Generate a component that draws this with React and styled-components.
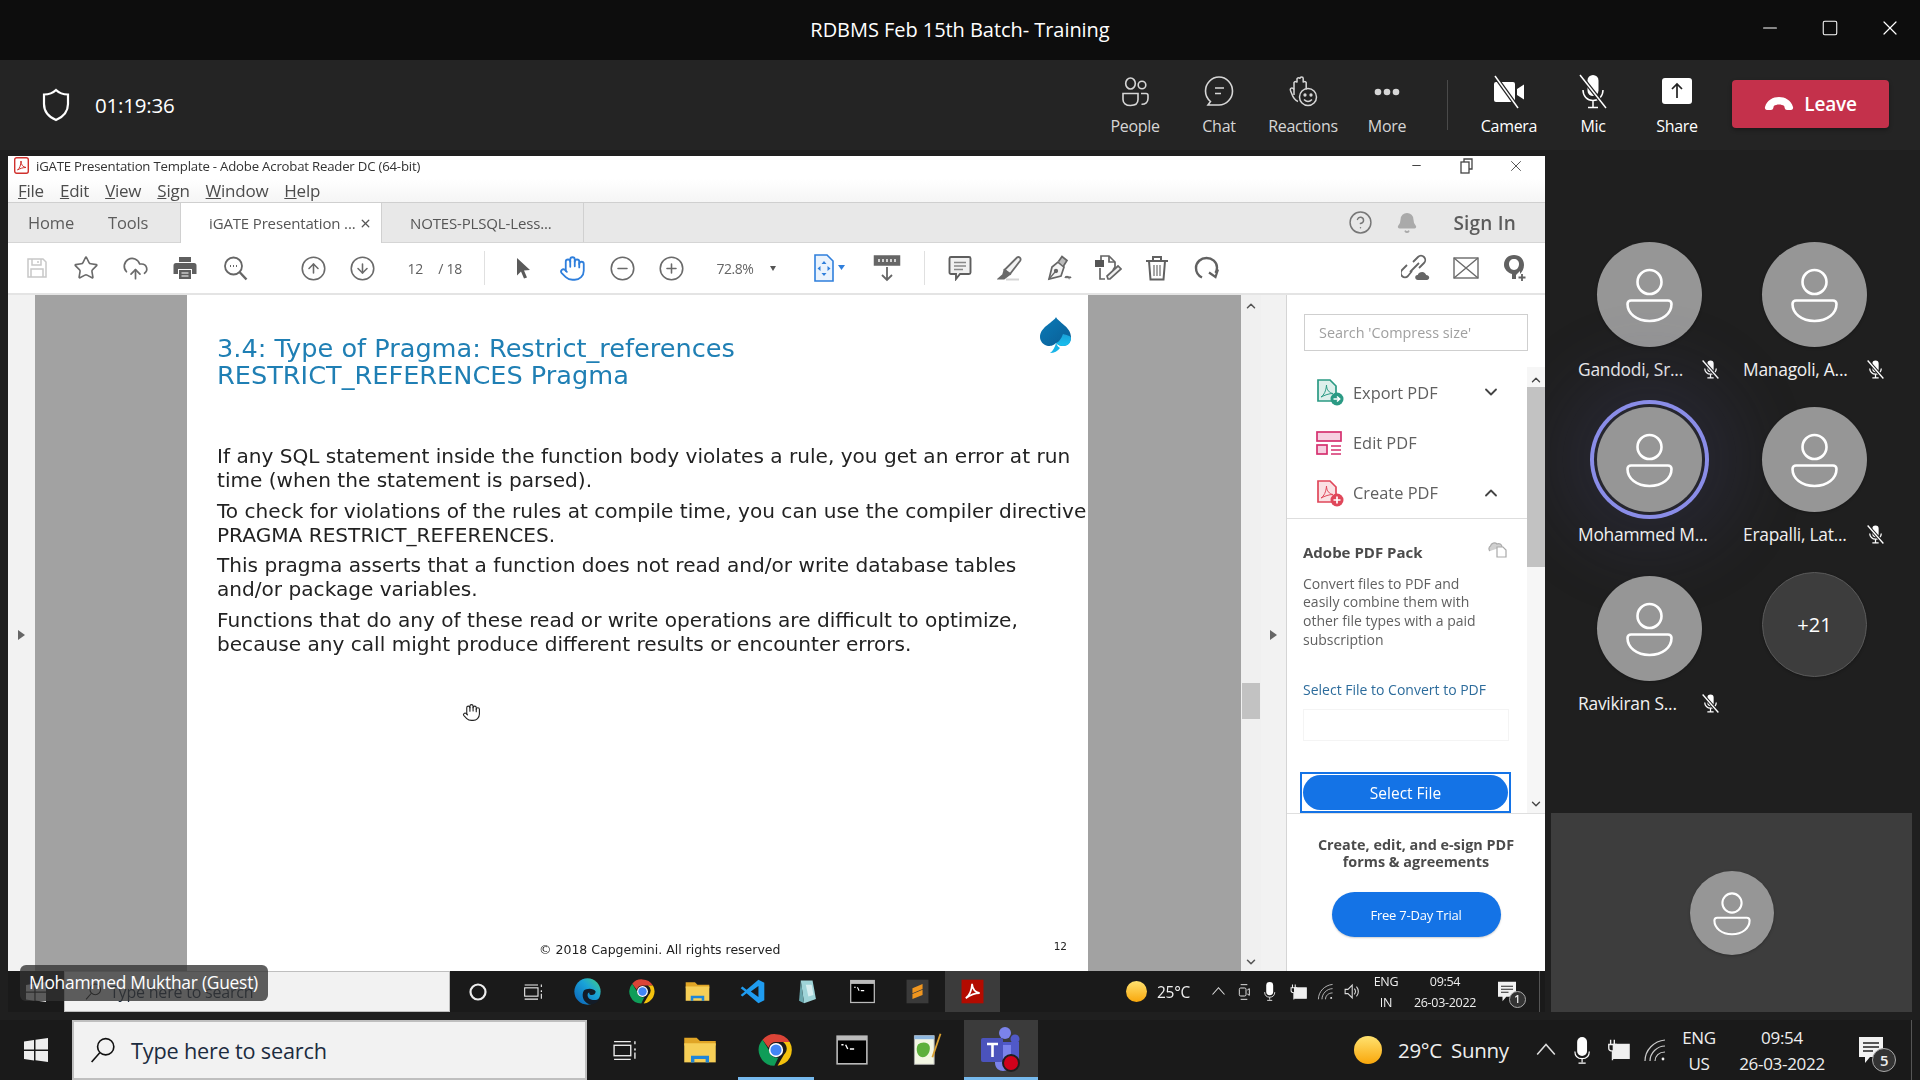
import React from "react";
import styled, { createGlobalStyle } from "styled-components";
import {
  Star, CloudUpload, CircleArrowUp, CircleArrowDown, Hand, CircleMinus, CirclePlus,
  ChevronDown, ChevronUp, X, Minus, Square, HelpCircle, Bell,
} from "lucide-react";

const GlobalStyle = createGlobalStyle`
  html, body { margin: 0; padding: 0; background: #1f1f1f; overflow: hidden; }
  * { box-sizing: border-box; }
`;

const Root = styled.div`
  width: 1920px;
  height: 1080px;
  display: flex;
  flex-direction: column;
  font-family: "Open Sans", "Noto Sans", sans-serif;
  color: #fff;
  background: #1f1f1f;
`;

/* ---------- teams chrome ---------- */
const TitleBar = styled.div`
  height: 60px;
  background: #0d0d0d;
  display: grid;
  grid-template-columns: 1fr auto 1fr;
  align-items: center;
`;
const MeetingTitle = styled.div`
  grid-column: 2;
  font-size: 20px;
  letter-spacing: -0.05px;
  padding-bottom: 1px;
`;
const WinControls = styled.div`
  grid-column: 3;
  justify-self: end;
  display: flex;
  height: 60px;
  padding-bottom: 4px;
`;
const WinControl = styled.div`
  width: 60px;
  display: flex;
  align-items: center;
  justify-content: center;
  color: #fff;
`;
const MeetingBar = styled.div`
  height: 90px;
  background: #242424;
  display: flex;
  align-items: flex-start;
  padding-left: 41px;
  padding-right: 31px;
`;
const Timer = styled.div`
  display: flex;
  align-items: center;
  gap: 24px;
  height: 90px;
  font-size: 20.5px;
  letter-spacing: -0.2px;
`;
const ToolGroup = styled.div`
  display: flex;
  margin-left: ${(p) => (p.$auto ? "auto" : "0")};
`;
const ToolButton = styled.div`
  width: 84px;
  height: 90px;
  padding-top: 16px;
  display: flex;
  flex-direction: column;
  align-items: center;
  color: ${(p) => (p.$bright ? "#fff" : "#d6d6d6")};
`;
const ToolIcon = styled.div`
  height: 32px;
  display: flex;
  align-items: center;
  justify-content: center;
`;
const ToolLabel = styled.div`
  margin-top: 7px;
  font-size: 16px;
  line-height: 22px;
  letter-spacing: -0.3px;
`;
const BarDivider = styled.div`
  width: 1px;
  height: 50px;
  margin: 20px 19px 0 18px;
  background: #4a4a4a;
`;
const LeaveButton = styled.div`
  width: 157px;
  height: 48px;
  margin: 20px 0 0 13px;
  border-radius: 4px;
  background: #c4314b;
  display: flex;
  align-items: center;
  justify-content: center;
  gap: 10px;
  font-size: 19px;
  font-weight: 600;
  letter-spacing: -0.2px;
  box-shadow: 0 2px 4px rgba(0, 0, 0, 0.3);
`;

const Stage = styled.div`
  flex: 1;
  min-height: 0;
  display: flex;
`;
const ShareColumn = styled.div`
  width: 1537px;
  margin: 6px 0 8px 8px;
  display: flex;
  flex-direction: column;
  position: relative;
`;
const ShareInner = styled.div`
  flex: 1;
  min-height: 0;
  display: flex;
  flex-direction: column;
  filter: blur(0.35px);
`;
const NameTag = styled.div`
  position: absolute;
  left: 12px;
  bottom: 11px;
  width: 248px;
  height: 36px;
  padding-left: 9px;
  border-radius: 6px;
  background: rgba(50, 50, 50, 0.78);
  font-size: 17.4px;
  letter-spacing: -0.25px;
  line-height: 35px;
  white-space: nowrap;
`;

/* ---------- acrobat ---------- */
const Acrobat = styled.div`
  flex: 1;
  min-height: 0;
  display: flex;
  flex-direction: column;
  background: #fff;
  color: #4b4b4b;
`;
const AcroTitle = styled.div`
  height: 23px;
  display: flex;
  align-items: center;
  padding: 0 0 4px 6px;
  gap: 7px;
  font-size: 13.2px;
  letter-spacing: -0.2px;
  color: #333;
`;
const AcroControls = styled.div`
  margin-left: auto;
  padding-right: 4px;
  display: flex;
  color: #444;
`;
const AcroControl = styled.div`
  width: 50px;
  height: 18px;
  display: flex;
  align-items: center;
  justify-content: center;
`;
const MenuRow = styled.div`
  height: 23px;
  display: flex;
  align-items: center;
  gap: 16px;
  padding-left: 10px;
  font-size: 17px;
  letter-spacing: -0.25px;
  color: #4d4d4d;
  background: linear-gradient(#ffffff, #f5f5f5);
`;
const TabRow = styled.div`
  height: 41px;
  display: flex;
  align-items: stretch;
  background: #e8e8e8;
  border-top: 1px solid #cfcfcf;
  border-bottom: 1px solid #d5d5d5;
  font-size: 15px;
  letter-spacing: -0.15px;
`;
const NavTab = styled.div`
  width: ${(p) => p.$w}px;
  padding-left: ${(p) => p.$pad}px;
  display: flex;
  align-items: center;
  font-size: 16.5px;
  color: #5c5c5c;
`;
const DocTab = styled.div`
  width: 202px;
  display: flex;
  align-items: center;
  padding-left: 28px;
  color: #555;
  border-right: 1px solid #d0d0d0;
  background: ${(p) => (p.$active ? "#fff" : "#e8e8e8")};
  margin-bottom: ${(p) => (p.$active ? "-1px" : "0")};
  border-left: ${(p) => (p.$active ? "1px solid #d0d0d0" : "0")};
`;
const TabClose = styled.span`
  margin-left: auto;
  margin-right: 9px;
  display: flex;
`;
const TabActions = styled.div`
  margin-left: auto;
  display: flex;
  align-items: center;
  padding-right: 29px;
  gap: 23px;
  color: #777;
`;
const SignIn = styled.span`
  margin-left: 12px;
  font-size: 19px;
  font-weight: 600;
  letter-spacing: 0.2px;
  color: #5c5c5c;
`;
const Toolbar = styled.div`
  height: 52px;
  display: flex;
  align-items: center;
  padding-left: 4px;
  border-bottom: 2px solid #e4e4e4;
  color: #6a6a6a;
`;
const TBtn = styled.div`
  width: ${(p) => p.$w || 49.5}px;
  margin-left: ${(p) => p.$ml || 0}px;
  display: flex;
  align-items: center;
  justify-content: center;
  color: ${(p) => p.$color || "inherit"};
`;
const TSep = styled.div`
  width: 1px;
  height: 34px;
  margin: 0 ${(p) => p.$r || 12}px 0 ${(p) => p.$l || 0}px;
  background: #e0e0e0;
`;
const PageBox = styled.div`
  width: 84px;
  margin-left: 12px;
  font-size: 14px;
  display: flex;
  color: #606060;
  letter-spacing: -0.2px;
  gap: 15px;
  padding-left: 8px;
`;
const ZoomBox = styled.div`
  width: 76px;
  margin-left: 7px;
  font-size: 14px;
  letter-spacing: -0.5px;
  display: flex;
  align-items: center;
  padding-left: 13px;
  gap: 17px;
  color: #666;
`;
const Caret = styled.span`
  width: 0;
  height: 0;
  border-left: 3.5px solid transparent;
  border-right: 3.5px solid transparent;
  border-top: 5px solid ${(p) => p.$color || "#555"};
`;
const AcroBody = styled.div`
  flex: 1;
  min-height: 0;
  display: flex;
`;
const Strip = styled.div`
  width: ${(p) => p.$w}px;
  background: #f2f2f2;
  display: flex;
  align-items: center;
  justify-content: center;
  padding-top: 4px;
`;
const ArrowRight = styled.span`
  width: 0;
  height: 0;
  border-top: 5px solid transparent;
  border-bottom: 5px solid transparent;
  border-left: 7px solid #666;
`;
const GrayArea = styled.div`
  flex: 0 0 ${(p) => p.$w}px;
  background: #a2a2a2;
`;
const PdfPage = styled.div`
  width: 901px;
  background: #fff;
  position: relative;
  display: flex;
  flex-direction: column;
  padding: 40px 0 12px 30px;
  font-family: "DejaVu Sans", Verdana, sans-serif;
  color: #222;
`;
const PageHeading = styled.div`
  font-size: 25.6px;
  line-height: 27px;
  color: #1f7fb4;
  margin-bottom: 55px;
`;
const PagePara = styled.p`
  margin: 0 0 6.5px;
  font-size: 20.1px;
  line-height: 24px;
  white-space: nowrap;
`;
const PageFooter = styled.div`
  margin-top: auto;
  margin-left: -30px;
  padding-left: 352px;
  padding-right: 21px;
  display: flex;
  align-items: flex-start;
  justify-content: space-between;
  font-size: 12.5px;
  line-height: 18px;
`;
const PageNumber = styled.span`
  font-size: 10.5px;
  line-height: 10px;
`;
const PageLogo = styled.div`
  position: absolute;
  top: 21px;
  right: 15px;
`;
const HandCursor = styled.div`
  position: absolute;
  left: 275px;
  top: 408px;
  color: #222;
`;
const DocScroll = styled.div`
  width: 20px;
  background: #f0f0f0;
  display: flex;
  flex-direction: column;
  align-items: center;
  padding-top: 4px;
  color: #555;
`;
const ScrollThumb = styled.div`
  width: 18px;
  height: ${(p) => p.$h}px;
  margin-top: ${(p) => p.$mt}px;
  background: #c2c2c2;
`;
const ScrollEnd = styled.div`
  margin-top: auto;
  padding-bottom: 2px;
  display: flex;
`;
const SidePanel = styled.div`
  width: 259px;
  background: #fff;
  border-left: 1px solid #d5d5d5;
  display: flex;
  flex-direction: column;
`;
const SearchInput = styled.div`
  height: 37px;
  width: 224px;
  margin: 19px 0 16px 17px;
  border: 1px solid #cfcfcf;
  font-size: 14.4px;
  line-height: 35px;
  padding-left: 14px;
  color: #a0a0a0;
`;
const PanelScrollArea = styled.div`
  height: 447px;
  display: flex;
  border-bottom: 1px solid #dfdfdf;
`;
const PanelList = styled.div`
  flex: 1;
  min-width: 0;
`;
const ToolRow = styled.div`
  height: 50.5px;
  display: flex;
  align-items: center;
  padding-left: 29px;
  gap: ${(p) => p.$gap || 9}px;
  font-size: 16.4px;
  color: #606060;
  border-bottom: ${(p) => (p.$open ? "1px solid #dedede" : "0")};
`;
const RowChevron = styled.span`
  margin-left: auto;
  margin-right: 26px;
  display: flex;
  color: #444;
`;
const PackBlock = styled.div`
  padding: 22px 0 0 16px;
  position: relative;
`;
const PackTitle = styled.div`
  font-size: 15px;
  font-weight: 700;
  color: #4b4b4b;
  line-height: 22px;
`;
const PackCopyIcon = styled.div`
  position: absolute;
  right: 19px;
  top: 21px;
  color: #a9a9a9;
`;
const PackText = styled.div`
  margin-top: 12px;
  font-size: 14px;
  line-height: 18.8px;
  color: #606060;
  white-space: nowrap;
`;
const PackLink = styled.div`
  margin-top: 30px;
  font-size: 14px;
  line-height: 20px;
  color: #2d6c9c;
  white-space: nowrap;
`;
const PackInput = styled.div`
  width: 206px;
  height: 32px;
  margin-top: 9px;
  border: 1px solid #f4f4f4;
`;
const FocusRing = styled.div`
  width: 211px;
  height: 41px;
  margin: 31.5px 0 0 -3px;
  border: 2px solid #1473e6;
  padding: 1px 1px;
`;
const PillButton = styled.div`
  width: ${(p) => p.$w || "100%"};
  height: ${(p) => p.$h || "35px"};
  border-radius: 24px;
  background: #1473e6;
  color: #fff;
  font-size: ${(p) => p.$fs || "15.5px"};
  display: flex;
  align-items: center;
  justify-content: center;
  letter-spacing: ${(p) => p.$ls || "0"};
`;
const PanelScrollbar = styled.div`
  width: 18px;
  background: #f6f6f6;
  display: flex;
  flex-direction: column;
  align-items: center;
  padding-top: 6px;
  color: #444;
`;
const Promo = styled.div`
  flex: 1;
  display: flex;
  flex-direction: column;
  align-items: center;
  padding-top: 22px;
`;
const PromoText = styled.div`
  font-size: 14.4px;
  font-weight: 700;
  line-height: 17px;
  color: #4b4b4b;
  text-align: center;
  white-space: nowrap;
`;
const PromoButton = styled(PillButton)`
  margin-top: 22px;
  box-shadow: 0 1px 2px rgba(0, 0, 0, 0.2);
`;

/* ---------- windows taskbars ---------- */
const Taskbar = styled.div`
  height: ${(p) => p.$h}px;
  flex: 0 0 ${(p) => p.$h}px;
  background: #1a1a1a;
  display: flex;
  align-items: stretch;
  color: #eee;
`;
const StartButton = styled.div`
  width: ${(p) => p.$w}px;
  display: flex;
  align-items: center;
  justify-content: center;
`;
const SearchBox = styled.div`
  width: ${(p) => p.$w}px;
  display: flex;
  align-items: center;
  gap: ${(p) => p.$gap}px;
  padding-left: ${(p) => p.$pad}px;
  background: #f2f2f2;
  border: ${(p) => p.$b}px solid #bfbfbf;
  color: #1c2c3f;
  font-size: ${(p) => p.$fs}px;
  letter-spacing: -0.2px;
  white-space: nowrap;
`;
const Slot = styled.div`
  width: ${(p) => p.$w}px;
  display: flex;
  align-items: center;
  justify-content: center;
  background: ${(p) => (p.$active ? "#3b3b3b" : "transparent")};
  border-bottom: ${(p) => (p.$bar ? "3px solid #76b9ed" : "0")};
  padding-top: ${(p) => (p.$bar ? "3px" : "0")};
`;
const Tray = styled.div`
  margin-left: auto;
  display: flex;
  align-items: stretch;
`;
const TrayCell = styled.div`
  width: ${(p) => p.$w}px;
  padding-left: ${(p) => p.$pl || 0}px;
  display: flex;
  flex-direction: ${(p) => (p.$stack ? "column" : "row")};
  align-items: center;
  justify-content: ${(p) => (p.$left ? "flex-start" : "center")};
  gap: ${(p) => p.$gap || 0}px;
  font-size: ${(p) => p.$fs || 14}px;
  letter-spacing: -0.3px;
  white-space: nowrap;
  word-spacing: ${(p) => p.$ws || 0}px;
`;
const TrayEdge = styled.div`
  width: ${(p) => p.$w}px;
  display: flex;
  justify-content: center;
  &::after {
    content: "";
    width: 1px;
    background: #555;
  }
`;
const NotifWrap = styled.div`
  position: relative;
  display: flex;
`;
const NotifBadge = styled.span`
  position: absolute;
  right: ${(p) => -p.$s / 2}px;
  bottom: ${(p) => -p.$s / 3}px;
  width: ${(p) => p.$s}px;
  height: ${(p) => p.$s}px;
  border: 1.5px solid #aaa;
  border-radius: 50%;
  background: #333;
  font-size: ${(p) => p.$s * 0.62}px;
  font-weight: 600;
  display: flex;
  align-items: center;
  justify-content: center;
`;

/* ---------- right rail ---------- */
const Rail = styled.div`
  flex: 1;
  display: flex;
  flex-direction: column;
`;
const ParticipantGrid = styled.div`
  display: grid;
  grid-template-columns: 143px 143px;
  column-gap: 22px;
  row-gap: 27px;
  padding: 92px 0 0 33px;
`;
const Tile = styled.div`
  display: flex;
  flex-direction: column;
  margin-top: ${(p) => p.$drop || 0}px;
`;
const Avatar = styled.div`
  width: ${(p) => p.$size || 105}px;
  height: ${(p) => p.$size || 105}px;
  align-self: center;
  border-radius: 50%;
  background: ${(p) => (p.$more ? "#3d3d3d" : "#969696")};
  border: ${(p) => (p.$more ? "1px solid #5a5a5a" : "0")};
  display: flex;
  align-items: center;
  justify-content: center;
  font-size: 20px;
  box-shadow: ${(p) =>
    p.$speaking
      ? "0 0 0 3px #26262e, 0 0 0 7px #8a8de8, 0 0 70px 40px rgba(70, 70, 120, 0.2)"
      : "0 1px 3px rgba(0,0,0,0.25)"};
`;
const TileLabel = styled.div`
  margin-top: 11px;
  height: 22px;
  display: flex;
  align-items: center;
  justify-content: space-between;
  font-size: 17.4px;
  letter-spacing: -0.25px;
  white-space: nowrap;
  color: #f0f0f0;
`;
const SelfTile = styled.div`
  margin: auto 8px 8px 6px;
  height: 199px;
  background: #3d3d3d;
  display: flex;
  align-items: center;
  justify-content: center;
`;

/* ---------- drawings ---------- */
const PersonIcon = () => (
  <svg width="100%" height="100%" viewBox="0 0 105 105" fill="none" stroke="#fff" strokeWidth="2.6">
    <circle cx="52.5" cy="40" r="12" />
    <path d="M34 58.5h37a3.5 3.5 0 0 1 3.5 3.5c0 9.5-9 17-22 17s-22-7.5-22-17a3.5 3.5 0 0 1 3.5-3.5z" />
  </svg>
);
const MutedMic = ({ size = 21, color = "#fff" }) => (
  <svg width={size} height={size} viewBox="0 0 20 20" fill="none" stroke={color} style={{ flex: "none" }}>
    <rect x="7" y="1.5" width="6" height="11" rx="3" fill={color} stroke="none" />
    <path d="M4.5 9a5.5 5.5 0 0 0 11 0M10 14.5V18M7 18h6" strokeWidth="1.2" />
    <path d="M2.5 1.5l15 17" stroke="#1f1f1f" strokeWidth="3.2" />
    <path d="M2.5 1.5l15 17" strokeWidth="1.3" />
  </svg>
);
const Shield = () => (
  <svg width="30" height="34" viewBox="0 0 30 34" fill="none" stroke="#fff" strokeWidth="2.2">
    <path d="M15 2c3 3 7.5 4.5 12 4.5V16c0 8-5 13-12 16-7-3-12-8-12-16V6.5C7.5 6.5 12 5 15 2z" />
  </svg>
);
const PeopleGlyph = () => (
  <svg width="32" height="32" viewBox="0 0 32 32" fill="none" stroke="currentColor" strokeWidth="1.6">
    <ellipse cx="11.5" cy="7.5" rx="4.8" ry="5.5" />
    <circle cx="23" cy="9" r="3.8" />
    <path d="M4 17.5h15v6c0 3.5-2.7 6-7.5 6S4 27 4 23.5z" />
    <path d="M22 17.5h5a2 2 0 0 1 2 2v3c0 3.5-2.5 6-6.5 5.8" />
  </svg>
);
const ChatGlyph = () => (
  <svg width="32" height="34" viewBox="0 0 32 34" fill="none" stroke="currentColor" strokeWidth="1.6">
    <path d="M16 2c7.500 0 13.500 6.500 13.500 14S23.500 30 16 30H5l2.500-3.500C4.500 24 2.500 20.500 2.500 16 2.500 8.500 8.500 2 16 2z" />
    <path d="M12 13h9M12 18.5h6" />
  </svg>
);
const ReactionGlyph = () => (
  <svg width="32" height="34" viewBox="0 0 32 34" fill="none" stroke="currentColor" strokeWidth="1.5">
    <path d="M7 20V7.500a1.600 1.600 0 0 1 3 0V3.800a1.600 1.600 0 0 1 3 0v-.3a1.600 1.600 0 0 1 3.200 0v4a1.600 1.600 0 0 1 3 0v7" />
    <path d="M7 14.500c-1.500-2.500-4.500-1.500-3.500 1C5 19 6 25 11 26.500" />
    <circle cx="21" cy="22" r="8.5" />
    <circle cx="18" cy="20" r=".9" fill="currentColor" />
    <circle cx="24" cy="20" r=".9" fill="currentColor" />
    <path d="M17 24.500c2.500 2.500 5.500 2.500 8 0" />
  </svg>
);
const DotsGlyph = () => (
  <svg width="26" height="8" viewBox="0 0 26 8" fill="currentColor">
    <circle cx="4" cy="4" r="3.3" />
    <circle cx="13" cy="4" r="3.3" />
    <circle cx="22" cy="4" r="3.3" />
  </svg>
);
const CameraGlyph = () => (
  <svg width="34" height="34" viewBox="0 0 34 34">
    <path d="M4 7h17a2 2 0 0 1 2 2v16a2 2 0 0 1-2 2H4a2 2 0 0 1-2-2V9a2 2 0 0 1 2-2zM25 14l7-4.500v15L25 20z" fill="#fff" />
    <path d="M3 1l23 32" stroke="#242424" strokeWidth="4" />
    <path d="M3 1l23 32" stroke="#fff" strokeWidth="1.5" />
  </svg>
);
const MicGlyph = () => (
  <svg width="32" height="36" viewBox="0 0 32 36" fill="none" stroke="#fff">
    <rect x="10.5" y="1" width="11" height="21" rx="5.5" fill="#fff" stroke="none" />
    <path d="M6 16c0 6 4 10.500 10 10.500S26 22 26 16M16 26.500V33M11 33.500h10" strokeWidth="1.5" />
    <path d="M3 1l26 33" stroke="#242424" strokeWidth="4" />
    <path d="M3 1l26 33" strokeWidth="1.5" />
  </svg>
);
const ShareGlyph = () => (
  <svg width="30" height="30" viewBox="0 0 30 30">
    <rect x="0" y="1" width="30" height="26" rx="3" fill="#fff" />
    <path d="M15 21V7M10 12l5-5 5 5" fill="none" stroke="#222" strokeWidth="1.7" />
  </svg>
);
const HangUp = () => (
  <svg width="30" height="16" viewBox="0 0 30 16" fill="#fff">
    <path d="M1 11C3 4 9 1 15 1s12 3 14 10c.4 1.600-.3 3-2 3h-4c-1.300 0-2-.7-2.300-2l-.5-2c-1.500-1-3.200-1.500-5.200-1.500S11.300 9 9.800 10l-.5 2c-.3 1.300-1 2-2.300 2H3c-1.700 0-2.400-1.400-2-3z" />
  </svg>
);
const PdfTitleIcon = () => (
  <svg width="15" height="17" viewBox="0 0 15 17">
    <rect x=".7" y=".7" width="13.6" height="15.6" rx="2" fill="#fff" stroke="#d0312d" strokeWidth="1.4" />
    <path d="M3.5 13c2-1.500 3.500-5 3.500-9 0 4 2 6 5 6.500-3 0-6 1-8.500 2.500z" fill="none" stroke="#d0312d" />
  </svg>
);
const RestoreGlyph = () => (
  <svg width="14" height="16" viewBox="0 0 14 16" fill="none" stroke="#444" strokeWidth="1.3">
    <rect x="2" y="4" width="8" height="11" />
    <path d="M5 4V1h8v10h-3" />
  </svg>
);
const SaveGlyph = () => (
  <svg width="24" height="24" viewBox="0 0 24 24" fill="none" stroke="#c8c8c8" strokeWidth="1.5">
    <path d="M3 3h15l3 3v15H3zM7 3v6h9V3M13 5v2M6 21v-8h12v8" />
  </svg>
);
const PrinterGlyph = () => (
  <svg width="26" height="26" viewBox="0 0 26 26" fill="#5f5f5f">
    <path d="M7 2h12v5H7zM4 8h18a2.500 2.500 0 0 1 2.500 2.500V19H20v-5H6v5H1.500v-8.500A2.500 2.500 0 0 1 4 8zM7 15h12v9H7z" />
    <path d="M9.5 18h7M9.5 21h7" stroke="#fff" strokeWidth="1.2" />
  </svg>
);
const ZoomGlyph = () => (
  <svg width="26" height="26" viewBox="0 0 26 26" fill="none" stroke="#666" strokeWidth="1.8">
    <circle cx="11.5" cy="11" r="8.5" />
    <path d="M17.5 17l7 7.500" strokeWidth="2.4" />
    <path d="M8 11h1M11 11h1M14 11h1" />
  </svg>
);
const PointerGlyph = () => (
  <svg width="20" height="24" viewBox="0 0 20 24" fill="#5a5a5a">
    <path d="M4 2l13 12-6 .5 3 7-3 1-3-7-4 4z" />
  </svg>
);
const FitGlyph = () => (
  <svg width="34" height="28" viewBox="0 0 34 28">
    <path d="M2 1h12l6 6v20H2z" fill="#eaf3fd" stroke="#2f7fdc" strokeWidth="1.6" />
    <path d="M11 7l2.500 3h-5zM11 22l-2.500-3h5zM4.500 14.500l3-2.500v5zM17.500 14.500l-3-2.500v5z" fill="#2f7fdc" />
    <path d="M25 11h7l-3.500 5z" fill="#2f7fdc" />
  </svg>
);
const ReadGlyph = () => (
  <svg width="28" height="28" viewBox="0 0 28 28" fill="none" stroke="#666" strokeWidth="1.5">
    <rect x="1.5" y="2" width="25" height="9" fill="#666" />
    <path d="M6 5v3M10 5v3M14 5v3M18 5v3M22 5v3" stroke="#fff" strokeWidth="1.4" />
    <path d="M14 13v13M9 21l5 5 5-5" strokeWidth="1.8" />
  </svg>
);
const CommentGlyph = () => (
  <svg width="24" height="26" viewBox="0 0 24 26" fill="none" stroke="#5e5e5e" strokeWidth="1.9">
    <path d="M3 2h18a1.500 1.500 0 0 1 1.500 1.500v14a1.500 1.500 0 0 1-1.500 1.500H12l-4 5v-5H3a1.500 1.500 0 0 1-1.500-1.500v-14A1.500 1.500 0 0 1 3 2z" fill="#f0f0f0" />
    <path d="M6 7.500h12M6 11h12M6 14.500h9" strokeWidth="1.3" stroke="#888" />
  </svg>
);
const HighlightGlyph = () => (
  <svg width="26" height="26" viewBox="0 0 26 26" fill="none" stroke="#6a6a6a" strokeWidth="1.8">
    <path d="M20 2.500c2-1.500 4.500 1 3.200 3.200L13 19l-5.500-4z" fill="#f2f2f2" />
    <path d="M7.500 15L6 20l-4 3.500h5L13 19z" fill="#6a6a6a" />
    <path d="M9 24.500h13" stroke="#d5d5d5" strokeWidth="2" />
  </svg>
);
const SignGlyph = () => (
  <svg width="27" height="26" viewBox="0 0 27 26" fill="none" stroke="#666" strokeWidth="1.7">
    <path d="M13 7l6 5-3 9-12 3 3-12z" fill="#f5f5f5" />
    <path d="M4 24l6-7" strokeWidth="1.2" />
    <circle cx="11" cy="16" r="1.3" fill="#666" />
    <path d="M13.500 6.500L17 1.500l5 4-3.500 5.500" fill="#bbb" />
    <path d="M20 23c1-2 1.500-2 2 0 .5-2 1-2 2 0 .5-1.500 1-1.500 2 0" strokeWidth="1.4" />
  </svg>
);
const StampGlyph = () => (
  <svg width="28" height="28" viewBox="0 0 28 28" fill="none" stroke="#666" strokeWidth="1.7">
    <rect x="1" y="6" width="9" height="7" fill="#555" stroke="none" />
    <path d="M7 6V2h8l6 6v5l-2 3M6 14v11h5" />
    <path d="M15 2v6h6" />
    <path d="M14 25l-1-3 11-10 3 3-11 10z" fill="#f2f2f2" />
  </svg>
);
const TrashGlyph = () => (
  <svg width="24" height="26" viewBox="0 0 24 26" fill="none" stroke="#616161" strokeWidth="2">
    <path d="M1 6h22M8 6V2h8v4" />
    <path d="M4 6l1.500 18.500h13L20 6" />
    <path d="M9 10v11M12 10v11M15 10v11" strokeWidth="1.1" />
  </svg>
);
const RotateGlyph = () => (
  <svg width="26" height="24" viewBox="0 0 26 24" fill="none" stroke="#616161" strokeWidth="2.4">
    <path d="M8 21.500C4 19.500 2 16.500 2 12 2 6 7 2 12.500 2S23 6 23 11.500c0 2-.5 4-1.500 5.500" />
    <path d="M15 16.500l6.500 4.500 2.500-7.500" strokeWidth="2.2" />
  </svg>
);
const LinkGlyph = () => (
  <svg width="30" height="28" viewBox="0 0 30 28" fill="none" stroke="#666" strokeWidth="1.8">
    <path d="M12 8l5-5a4.200 4.200 0 0 1 6 6l-5 5M11 17l-4 5a4.200 4.200 0 0 1-6-6l5-5M9 18l9-9" />
    <path d="M17 26c-2 0-3-1.500-2.800-3 .2-1.500 1.500-2.200 2.500-2 .5-2 2.500-3 4.500-3s3.500 1.500 4 3c1.500 0 3 1 3 2.500S27 26 26 26z" fill="#666" stroke="none" />
  </svg>
);
const MailGlyph = () => (
  <svg width="26" height="22" viewBox="0 0 26 22" fill="none" stroke="#6a6a6a" strokeWidth="1.4">
    <rect x="1" y="1" width="24" height="20" />
    <path d="M1 1l24 20M25 1L1 21" />
  </svg>
);
const UserAddGlyph = () => (
  <svg width="26" height="28" viewBox="0 0 26 28">
    <path d="M12 1c6 0 10 4 10 10 0 4-2 7-4 9v-3l-4 4v4h-4v-5c-4-1-8-5-8-9C2 5 6 1 12 1z" fill="#616161" />
    <path d="M7 10c0-3 2-5 5-5s5 2 5 5-2 6-5 6-5-3-5-6z" fill="#fff" />
    <path d="M20 20v7M16.500 23.500h7" stroke="#616161" strokeWidth="1.8" />
  </svg>
);
const PanelFile = ({ color, badge }) => (
  <svg width="28" height="28" viewBox="0 0 28 28" fill="none">
    <path d="M2 2h12l6 6v15H2z" fill={color} fillOpacity=".16" stroke={color} strokeWidth="1.7" />
    <path d="M5 19c3-2 5-6 5.500-12 0 5 3 8 6.500 8.500-4 0-8 1.500-12 3.500z" stroke={color} strokeWidth="1" />
    <circle cx="21" cy="21" r="6.5" fill={color} />
    {badge === "plus" ? (
      <path d="M21 17.500v7M17.500 21h7" stroke="#fff" strokeWidth="1.7" />
    ) : (
      <path d="M17.500 21h6M21 18.500l2.700 2.500-2.700 2.500" stroke="#fff" strokeWidth="1.5" />
    )}
  </svg>
);
const EditPdfGlyph = () => (
  <svg width="26" height="26" viewBox="0 0 26 26" fill="none" stroke="#d5316f" strokeWidth="1.7">
    <rect x="1" y="2" width="24" height="9" fill="#f6cfe0" />
    <rect x="1" y="15" width="10" height="9" fill="#f6cfe0" />
    <path d="M15 16h10M15 20h10M15 24h10" strokeWidth="1.3" />
  </svg>
);
const CopyGlyph = () => (
  <svg width="20" height="18" viewBox="0 0 20 18" fill="none" stroke="currentColor" strokeWidth="1.2">
    <path d="M2 11c-1.500-1-1.500-4 .5-5C3 3 7 2 9 4c2-1 5 0 5 3" fill="#d0d0d0" />
    <path d="M9 7h6l3 3v7H9z" fill="#fff" />
  </svg>
);
const Drop = () => (
  <svg width="34" height="40" viewBox="0 0 34 40">
    <defs>
      <linearGradient id="dropFill" x1="0" y1="0" x2="1" y2="1">
        <stop offset="0" stopColor="#0a7bb8" />
        <stop offset="1" stopColor="#0b5d94" />
      </linearGradient>
      <linearGradient id="dropLight" x1="0" y1="0" x2="0" y2="1">
        <stop offset="0" stopColor="#1aa0d8" />
        <stop offset="1" stopColor="#18c0ef" />
      </linearGradient>
    </defs>
    <path d="M17 1c2 5 15 10 15 20 0 5-3 9-8 9-3 0-5-1-7-3-3 3-6 3-8 3-5-1-8-5-8-9C1 11 15 6 17 1z" fill="url(#dropFill)" />
    <path d="M24 18c4 1 8 2 8 4 0 5-3 8-8 8-3 0-5-1-7-3 3-1 5-4 7-9z" fill="url(#dropLight)" />
    <path d="M17 27c-1 4-3 8-6 10 4 0 8-2 10-5-2-1-3-3-4-5z" fill="#18b4e8" />
  </svg>
);
const WinLogo = ({ size }) => (
  <svg width={size} height={size} viewBox="0 0 24 24" fill="currentColor">
    <path d="M0 3.500l10-1.500v9.500H0zM11.500 1.800L24 0v11.500H11.500zM0 13h10v9.500L0 21zM11.500 13H24v11l-12.500-1.800z" />
  </svg>
);
const SearchGlyph = ({ size, color = "#111" }) => (
  <svg width={size} height={size} viewBox="0 0 24 24" fill="none" stroke={color} strokeWidth="1.5">
    <circle cx="14.5" cy="9" r="7.5" />
    <path d="M9 14.500L1.500 23" />
  </svg>
);
const TaskView = ({ size }) => (
  <svg width={size} height={size} viewBox="0 0 24 24" fill="none" stroke="#eee" strokeWidth="1.3">
    <rect x="2" y="7" width="16" height="10" />
    <path d="M2 3.500h16M2 20.500h16M22 3v3M22 14v6" />
    <rect x="21.3" y="10" width="1.5" height="2" fill="#eee" stroke="none" />
  </svg>
);
const ChromeIcon = ({ size }) => (
  <svg width={size} height={size} viewBox="0 0 48 48">
    <path d="M24 4a20 20 0 0 1 17.300 10H24a10 10 0 0 0-9.500 7L7 11A20 20 0 0 1 24 4z" fill="#db4437" />
    <path d="M41.300 14A20 20 0 0 1 26 43.900L34 30a10 10 0 0 0-1-16z" fill="#f4c20d" />
    <path d="M7 11l8 13a10 10 0 0 0 12 9.500L22 44A20 20 0 0 1 7 11z" fill="#0f9d58" />
    <circle cx="24" cy="24" r="9" fill="#fff" />
    <circle cx="24" cy="24" r="7" fill="#4285f4" />
  </svg>
);
const FolderIcon = ({ size }) => (
  <svg width={size} height={size} viewBox="0 0 32 32">
    <path d="M2 5h11l3 3h14v4H2z" fill="#e0a526" />
    <path d="M2 10h28v17H2z" fill="#f6cf57" />
    <path d="M8 27v-6h16v6h-3v-3H11v3z" fill="#1f86d8" />
  </svg>
);
const EdgeIcon = ({ size }) => (
  <svg width={size} height={size} viewBox="0 0 32 32">
    <defs>
      <linearGradient id="edgeFill" x1="0" y1="1" x2="1" y2="0">
        <stop offset="0" stopColor="#0a5fb5" />
        <stop offset=".6" stopColor="#1aa3d8" />
        <stop offset="1" stopColor="#45d07f" />
      </linearGradient>
    </defs>
    <circle cx="16" cy="16" r="14.5" fill="url(#edgeFill)" />
    <path d="M12 15c3-3 11-3 13 1 0 5-8 5-7 1-2 0-3 4 0 7 3 2 8 2 11 0-1 4-7 7-11 6-7-2-9-10-6-15z" fill="#131c28" />
  </svg>
);
const VsCodeIcon = ({ size }) => (
  <svg width={size} height={size} viewBox="0 0 32 32">
    <path d="M23 2l7 3.500v21L23 30 9 18l-5 4-2-2 5-4-5-4 2-2 5 4z" fill="#1f9cf0" />
    <path d="M23 9.500L14 16l9 6.500z" fill="#1a1a1a" />
  </svg>
);
const NoteIcon = ({ size }) => (
  <svg width={size} height={size} viewBox="0 0 32 32">
    <path d="M8 3h14l4 22-14 5z" fill="#9fd4d8" />
    <path d="M8 3l4 27-6-3z" fill="#6aa7ad" />
    <path d="M14 8h7l2 12-6 2z" fill="#d5eef0" />
  </svg>
);
const CmdIcon = ({ size }) => (
  <svg width={size} height={size} viewBox="0 0 32 32">
    <rect x="2" y="3" width="28" height="26" fill="#000" stroke="#bbb" strokeWidth="1.5" />
    <rect x="2" y="3" width="28" height="4" fill="#bbb" />
    <path d="M6 11h2M10 11l2 4M14 15h4" stroke="#fff" strokeWidth="1.3" />
  </svg>
);
const SublimeIcon = ({ size }) => (
  <svg width={size} height={size} viewBox="0 0 32 32">
    <rect x="3" y="2" width="26" height="28" fill="#3a3a3a" />
    <path d="M22 7v6L10 18v-6zM10 25v-6l12-5v6z" fill="#f0961f" />
  </svg>
);
const AcrobatIcon = ({ size }) => (
  <svg width={size} height={size} viewBox="0 0 32 32">
    <rect x="3" y="2" width="26" height="28" fill="#b30b00" />
    <path d="M8 24c4-3 7-9 7.500-17 .5 6 4 10 9 11-5 0-11 2-16.500 6z" fill="none" stroke="#fff" strokeWidth="2" />
  </svg>
);
const NotepadPPIcon = ({ size }) => (
  <svg width={size} height={size} viewBox="0 0 36 40">
    <path d="M4 4h22v32H4z" fill="#f3f7e4" stroke="#aaa" />
    <path d="M4 4h22v4H4z" fill="#8fb8e0" />
    <path d="M8 14c4-4 12-3 13 2s-2 12-8 12-8-9-5-14z" fill="#5db03c" />
    <path d="M33 2L24 28" stroke="#d9a030" strokeWidth="2" />
  </svg>
);
const TeamsIcon = () => (
  <svg width="44" height="50" viewBox="0 0 44 50">
    <circle cx="26" cy="8" r="6" fill="#7b83eb" />
    <circle cx="36" cy="14" r="4.5" fill="#5059c9" />
    <path d="M24 17h16v14c0 5-4 9-9 9s-7-4-7-9z" fill="#5059c9" />
    <path d="M16 20h16v18c0 5-4 8-8 8s-8-3-8-8z" fill="#7b83eb" />
    <rect x="2" y="13" width="22" height="24" rx="2" fill="#4b53bc" />
    <path d="M8 19h11M13.500 19v13" stroke="#fff" strokeWidth="2.6" />
    <circle cx="32" cy="38" r="8" fill="#d0021b" stroke="#1f1f1f" strokeWidth="2" />
  </svg>
);
const Sun = ({ size }) => (
  <svg width={size} height={size} viewBox="0 0 40 40">
    <defs>
      <linearGradient id="sunFill" x1="0" y1="0" x2="0" y2="1">
        <stop offset="0" stopColor="#ffe270" />
        <stop offset="1" stopColor="#f9a70b" />
      </linearGradient>
    </defs>
    <circle cx="20" cy="20" r="20" fill="url(#sunFill)" />
  </svg>
);
const Caretup = ({ size }) => (
  <svg width={size} height={size} viewBox="0 0 20 20" fill="none" stroke="#ddd" strokeWidth="1.4">
    <path d="M2 14l8-9 8 9" />
  </svg>
);
const TrayMic = ({ h }) => (
  <svg width={h * 0.6} height={h} viewBox="0 0 18 30" fill="#fff">
    <rect x="3.5" y="0" width="11" height="21" rx="5.5" />
    <path d="M1 16c0 5 3 8 8 8s8-3 8-8M9 24v4M5 29h8" fill="none" stroke="#fff" strokeWidth="1.3" />
  </svg>
);
const Power = ({ size }) => (
  <svg width={size} height={size} viewBox="0 0 26 24" fill="none" stroke="#eee" strokeWidth="1.5">
    <rect x="8" y="6" width="17" height="15" fill="#f0f0f0" />
    <path d="M5 1v5M9 1v5M3 6h8v4c0 2-2 3-4 3s-4-1-4-3zM7 13v10" />
  </svg>
);
const Wifi = ({ size }) => (
  <svg width={size} height={size} viewBox="0 0 24 24" fill="none" stroke="#ccc" strokeWidth="1.2">
    <path d="M2 23C2 12 11 3 22 2M7 23c0-8 7-15 15-15M12 23c0-5 4-9 10-9" />
    <circle cx="20" cy="21" r="1.4" fill="#eee" stroke="none" />
  </svg>
);
const Speaker = ({ size }) => (
  <svg width={size} height={size} viewBox="0 0 24 24" fill="none" stroke="#ddd" strokeWidth="1.5">
    <path d="M3 9h4l6-6v18l-6-6H3zM16 8c2 2.500 2 5.500 0 8M19 5c3.500 4 3.500 10 0 14" />
  </svg>
);
const VideoTray = ({ size }) => (
  <svg width={size} height={size} viewBox="0 0 20 30" fill="none" stroke="#ddd" strokeWidth="1.5">
    <path d="M5 4h10M5 26h10" />
    <rect x="3" y="9" width="10" height="12" rx="2" />
    <path d="M15 12l3-2v10l-3-2" />
  </svg>
);
const NotifGlyph = ({ w, h }) => (
  <svg width={w} height={h} viewBox="0 0 26 28">
    <path d="M1 1h24v20H12l-5 6v-6H1z" fill="#f2f2f2" />
    <path d="M5 7h16M5 11h16M5 15h10" stroke="#222" strokeWidth="1.3" />
  </svg>
);

const Participant = ({ name, muted, speaking, drop }) => (
  <Tile $drop={drop}>
    <Avatar $speaking={speaking}>
      <PersonIcon />
    </Avatar>
    <TileLabel>
      {name}
      {muted && <MutedMic />}
    </TileLabel>
  </Tile>
);

const App = () => (
  <Root>
    <GlobalStyle />
    <TitleBar>
      <MeetingTitle>RDBMS Feb 15th Batch- Training</MeetingTitle>
      <WinControls>
        <WinControl><Minus size={22} strokeWidth={1.2} /></WinControl>
        <WinControl><Square size={18} strokeWidth={1.4} /></WinControl>
        <WinControl><X size={24} strokeWidth={1.2} /></WinControl>
      </WinControls>
    </TitleBar>

    <MeetingBar>
      <Timer>
        <Shield />
        01:19:36
      </Timer>
      <ToolGroup $auto>
        <ToolButton><ToolIcon><PeopleGlyph /></ToolIcon><ToolLabel>People</ToolLabel></ToolButton>
        <ToolButton><ToolIcon><ChatGlyph /></ToolIcon><ToolLabel>Chat</ToolLabel></ToolButton>
        <ToolButton><ToolIcon><ReactionGlyph /></ToolIcon><ToolLabel>Reactions</ToolLabel></ToolButton>
        <ToolButton><ToolIcon><DotsGlyph /></ToolIcon><ToolLabel>More</ToolLabel></ToolButton>
      </ToolGroup>
      <BarDivider />
      <ToolGroup>
        <ToolButton $bright><ToolIcon><CameraGlyph /></ToolIcon><ToolLabel>Camera</ToolLabel></ToolButton>
        <ToolButton $bright><ToolIcon><MicGlyph /></ToolIcon><ToolLabel>Mic</ToolLabel></ToolButton>
        <ToolButton $bright><ToolIcon><ShareGlyph /></ToolIcon><ToolLabel>Share</ToolLabel></ToolButton>
      </ToolGroup>
      <LeaveButton><HangUp />Leave</LeaveButton>
    </MeetingBar>

    <Stage>
      <ShareColumn>
        <ShareInner>
          <Acrobat>
            <AcroTitle>
              <PdfTitleIcon />
              iGATE Presentation Template - Adobe Acrobat Reader DC (64-bit)
              <AcroControls>
                <AcroControl><Minus size={13} /></AcroControl>
                <AcroControl><RestoreGlyph /></AcroControl>
                <AcroControl><X size={18} strokeWidth={1.2} /></AcroControl>
              </AcroControls>
            </AcroTitle>
            <MenuRow>
              <span><u>F</u>ile</span>
              <span><u>E</u>dit</span>
              <span><u>V</u>iew</span>
              <span><u>S</u>ign</span>
              <span><u>W</u>indow</span>
              <span><u>H</u>elp</span>
            </MenuRow>
            <TabRow>
              <NavTab $w={80} $pad={20}>Home</NavTab>
              <NavTab $w={92} $pad={20}>Tools</NavTab>
              <DocTab $active>
                iGATE Presentation ...
                <TabClose><X size={13} strokeWidth={2.4} /></TabClose>
              </DocTab>
              <DocTab>NOTES-PLSQL-Less...</DocTab>
              <TabActions>
                <HelpCircle size={25} strokeWidth={1.4} />
                <Bell size={22} fill="#aaa" stroke="#aaa" />
                <SignIn>Sign In</SignIn>
              </TabActions>
            </TabRow>
            <Toolbar>
              <TBtn><SaveGlyph /></TBtn>
              <TBtn><Star size={26} strokeWidth={1.5} /></TBtn>
              <TBtn><CloudUpload size={27} strokeWidth={1.5} /></TBtn>
              <TBtn><PrinterGlyph /></TBtn>
              <TBtn><ZoomGlyph /></TBtn>
              <TBtn $ml={29}><CircleArrowUp size={27} strokeWidth={1.4} /></TBtn>
              <TBtn><CircleArrowDown size={27} strokeWidth={1.4} /></TBtn>
              <PageBox><span>12</span><span>/ 18</span></PageBox>
              <TSep $r={14} />
              <TBtn><PointerGlyph /></TBtn>
              <TBtn $color="#2f7fdc"><Hand size={27} strokeWidth={1.6} /></TBtn>
              <TBtn><CircleMinus size={27} strokeWidth={1.4} /></TBtn>
              <TBtn><CirclePlus size={27} strokeWidth={1.4} /></TBtn>
              <ZoomBox>72.8%<Caret /></ZoomBox>
              <TBtn $ml={26}><FitGlyph /></TBtn>
              <TBtn $ml={7}><ReadGlyph /></TBtn>
              <TSep $l={12} $r={11} />
              <TBtn><CommentGlyph /></TBtn>
              <TBtn><HighlightGlyph /></TBtn>
              <TBtn $w={48.5}><SignGlyph /></TBtn>
              <TBtn><StampGlyph /></TBtn>
              <TBtn><TrashGlyph /></TBtn>
              <TBtn><RotateGlyph /></TBtn>
              <TBtn $ml={160}><LinkGlyph /></TBtn>
              <TBtn><MailGlyph /></TBtn>
              <TBtn><UserAddGlyph /></TBtn>
            </Toolbar>
            <AcroBody>
              <Strip $w={27}><ArrowRight /></Strip>
              <GrayArea $w={152} />
              <PdfPage>
                <PageHeading>
                  3.4: Type of Pragma: Restrict_references
                  <br />
                  RESTRICT_REFERENCES Pragma
                </PageHeading>
                <PagePara>
                  If any SQL statement inside the function body violates a rule, you get an error at run
                  <br />
                  time (when the statement is parsed).
                </PagePara>
                <PagePara>
                  To check for violations of the rules at compile time, you can use the compiler directive
                  <br />
                  PRAGMA RESTRICT_REFERENCES.
                </PagePara>
                <PagePara>
                  This pragma asserts that a function does not read and/or write database tables
                  <br />
                  and/or package variables.
                </PagePara>
                <PagePara>
                  Functions that do any of these read or write operations are difficult to optimize,
                  <br />
                  because any call might produce different results or encounter errors.
                </PagePara>
                <PageFooter>
                  <span>© 2018 Capgemini. All rights reserved</span>
                  <PageNumber>12</PageNumber>
                </PageFooter>
                <PageLogo><Drop /></PageLogo>
                <HandCursor><Hand size={19} strokeWidth={1.4} /></HandCursor>
              </PdfPage>
              <GrayArea $w={153} />
              <DocScroll>
                <ChevronUp size={14} strokeWidth={2.6} />
                <ScrollThumb $mt={370} $h={36} />
                <ScrollEnd><ChevronDown size={14} strokeWidth={2.6} /></ScrollEnd>
              </DocScroll>
              <Strip $w={25}><ArrowRight /></Strip>
              <SidePanel>
                <SearchInput>Search 'Compress size'</SearchInput>
                <PanelScrollArea>
                  <PanelList>
                    <ToolRow>
                      <PanelFile color="#2b9a84" />Export PDF
                      <RowChevron><ChevronDown size={20} strokeWidth={2.2} /></RowChevron>
                    </ToolRow>
                    <ToolRow $gap={11}><EditPdfGlyph />Edit PDF</ToolRow>
                    <ToolRow $open>
                      <PanelFile color="#e0475a" badge="plus" />Create PDF
                      <RowChevron><ChevronUp size={20} strokeWidth={2.2} /></RowChevron>
                    </ToolRow>
                    <PackBlock>
                      <PackTitle>Adobe PDF Pack</PackTitle>
                      <PackCopyIcon><CopyGlyph /></PackCopyIcon>
                      <PackText>
                        Convert files to PDF and
                        <br />
                        easily combine them with
                        <br />
                        other file types with a paid
                        <br />
                        subscription
                      </PackText>
                      <PackLink>Select File to Convert to PDF</PackLink>
                      <PackInput />
                      <FocusRing>
                        <PillButton>Select File</PillButton>
                      </FocusRing>
                    </PackBlock>
                  </PanelList>
                  <PanelScrollbar>
                    <ChevronUp size={14} strokeWidth={2.4} />
                    <ScrollThumb $mt={0} $h={180} />
                    <ScrollEnd><ChevronDown size={14} strokeWidth={2.4} /></ScrollEnd>
                  </PanelScrollbar>
                </PanelScrollArea>
                <Promo>
                  <PromoText>
                    Create, edit, and e-sign PDF
                    <br />
                    forms &amp; agreements
                  </PromoText>
                  <PromoButton $w="169px" $h="45px" $fs="13px" $ls="-0.2px">Free 7-Day Trial</PromoButton>
                </Promo>
              </SidePanel>
            </AcroBody>
          </Acrobat>
          <Taskbar $h={41}>
            <StartButton $w={56}><WinLogo size={20} /></StartButton>
            <SearchBox $w={386} $pad={20} $gap={8} $fs={16} $b={1}>
              <SearchGlyph size={17} />Type here to search
            </SearchBox>
            <Slot $w={55}><svg width="20" height="20" viewBox="0 0 20 20" fill="none" stroke="#eee" strokeWidth="2.2"><circle cx="10" cy="10" r="7.5" /></svg></Slot>
            <Slot $w={55}><TaskView size={20} /></Slot>
            <Slot $w={55}><EdgeIcon size={29} /></Slot>
            <Slot $w={55}><ChromeIcon size={29} /></Slot>
            <Slot $w={55}><FolderIcon size={27} /></Slot>
            <Slot $w={55}><VsCodeIcon size={27} /></Slot>
            <Slot $w={55}><NoteIcon size={27} /></Slot>
            <Slot $w={55}><CmdIcon size={27} /></Slot>
            <Slot $w={55}><SublimeIcon size={27} /></Slot>
            <Slot $w={55} $active><AcrobatIcon size={27} /></Slot>
            <Tray>
              <TrayCell $w={28}><Sun size={21} /></TrayCell>
              <TrayCell $w={55} $pl={7} $left $fs={15.5}>25°C</TrayCell>
              <TrayCell $w={26}><Caretup size={15} /></TrayCell>
              <TrayCell $w={26}><VideoTray size={20} /></TrayCell>
              <TrayCell $w={26}><TrayMic h={19} /></TrayCell>
              <TrayCell $w={29}><Power size={18} /></TrayCell>
              <TrayCell $w={27}><Wifi size={17} /></TrayCell>
              <TrayCell $w={24}><Speaker size={17} /></TrayCell>
              <TrayCell $w={46} $stack $gap={4} $fs={12.5}><span>ENG</span><span>IN</span></TrayCell>
              <TrayCell $w={72} $stack $gap={4} $fs={12.5}><span>09:54</span><span>26-03-2022</span></TrayCell>
              <TrayCell $w={52}>
                <NotifWrap><NotifGlyph w={20} h={21} /><NotifBadge $s={17}>1</NotifBadge></NotifWrap>
              </TrayCell>
              <TrayEdge $w={12} />
            </Tray>
          </Taskbar>
        </ShareInner>
        <NameTag>Mohammed Mukthar (Guest)</NameTag>
      </ShareColumn>

      <Rail>
        <ParticipantGrid>
          <Participant name="Gandodi, Sr..." muted />
          <Participant name="Managoli, A..." muted />
          <Participant name="Mohammed M..." speaking />
          <Participant name="Erapalli, Lat..." muted />
          <Participant name="Ravikiran S..." muted drop={4} />
          <Tile><Avatar $more>+21</Avatar></Tile>
        </ParticipantGrid>
        <SelfTile>
          <Avatar $size={84}><PersonIcon /></Avatar>
        </SelfTile>
      </Rail>
    </Stage>

    <Taskbar $h={60}>
      <StartButton $w={72}><WinLogo size={24} /></StartButton>
      <SearchBox $w={515} $pad={16} $gap={15} $fs={21.7} $b={2}>
        <SearchGlyph size={26} />Type here to search
      </SearchBox>
      <Slot $w={75}><TaskView size={25} /></Slot>
      <Slot $w={76}><FolderIcon size={36} /></Slot>
      <Slot $w={76} $bar><ChromeIcon size={38} /></Slot>
      <Slot $w={75}><CmdIcon size={34} /></Slot>
      <Slot $w={75}><NotepadPPIcon size={36} /></Slot>
      <Slot $w={74} $active $bar><TeamsIcon /></Slot>
      <Tray>
        <TrayCell $w={32}><Sun size={28} /></TrayCell>
        <TrayCell $w={144} $pl={14} $left $fs={20.5} $ws={4}>29°C Sunny</TrayCell>
        <TrayCell $w={36}><Caretup size={22} /></TrayCell>
        <TrayCell $w={36}><TrayMic h={27} /></TrayCell>
        <TrayCell $w={36}><Power size={24} /></TrayCell>
        <TrayCell $w={38}><Wifi size={24} /></TrayCell>
        <TrayCell $w={50} $stack $gap={3} $fs={17}><span>ENG</span><span>US</span></TrayCell>
        <TrayCell $w={116} $stack $gap={3} $fs={17}><span>09:54</span><span>26-03-2022</span></TrayCell>
        <TrayCell $w={62}>
          <NotifWrap><NotifGlyph w={26} h={28} /><NotifBadge $s={24}>5</NotifBadge></NotifWrap>
        </TrayCell>
        <TrayEdge $w={18} />
      </Tray>
    </Taskbar>
  </Root>
);

export default App;
